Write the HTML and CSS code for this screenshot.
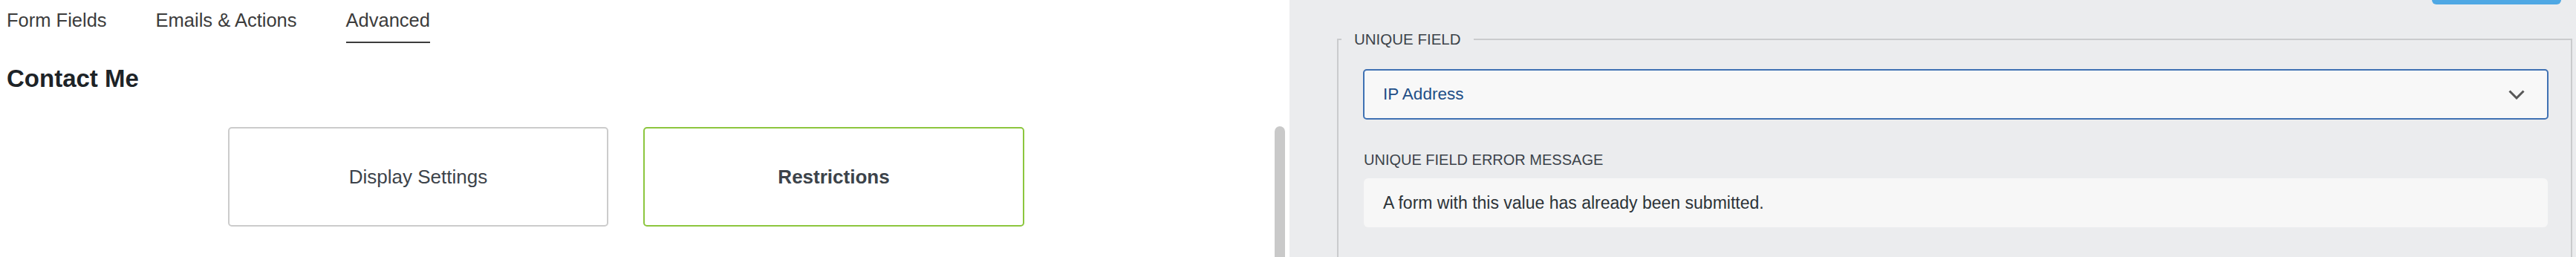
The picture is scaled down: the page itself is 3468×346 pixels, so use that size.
FILE: index.html
```html
<!DOCTYPE html>
<html lang="en">
<head>
<meta charset="utf-8">
<title>Contact Me – Advanced</title>
<link rel="stylesheet" href="styles.css">
</head>
<body>
<div class="app">
  <div class="left">
    <div class="left-content">
      <nav class="tabs">
        <span class="tab">Form Fields</span>
        <span class="tab">Emails &amp; Actions</span>
        <span class="tab active">Advanced</span>
      </nav>
      <h2 class="form-title">Contact Me</h2>
      <div class="cards">
        <div class="card">Display Settings</div>
        <div class="card card-active">Restrictions</div>
      </div>
    </div>
    <div class="scroll"><div class="thumb"></div></div>
  </div>
  <div class="right">
    <div class="topbar"><div class="save-btn"></div></div>
    <fieldset class="group">
      <legend class="group-legend">UNIQUE FIELD</legend>
      <div class="group-body">
        <div class="select">
          <span class="select-value">IP Address</span>
          <svg class="chevron" width="22" height="13" viewBox="0 0 22 13"><polyline points="1.5,1.5 11,11 20.5,1.5" fill="none" stroke="#575757" stroke-width="3"/></svg>
        </div>
        <div class="field-label">UNIQUE FIELD ERROR MESSAGE</div>
        <div class="text-input">A form with this value has already been submitted.</div>
      </div>
    </fieldset>
  </div>
</div>
</body>
</html>
```

FILE: styles.css
```css
html, body {
  margin: 0;
  padding: 0;
  height: 346px;
  overflow: hidden;
  background: #fff;
  font-family: "Liberation Sans", Arial, sans-serif;
}

.app {
  display: flex;
  height: 346px;
}

.left {
  width: 1736px;
  flex: none;
  display: flex;
  background: #fff;
}

.left-content {
  flex: 1;
  padding-left: 9px;
}

.tabs {
  display: flex;
  gap: 66px;
  padding-top: 12px;
}

.tab {
  font-size: 25.5px;
  line-height: 30px;
  color: #3c3c3c;
  padding-bottom: 14px;
  border-bottom: 2px solid transparent;
}

.tab.active {
  border-bottom-color: #3c3c3c;
}

.form-title {
  margin: 30px 0 0;
  font-size: 33px;
  line-height: 36px;
  font-weight: 700;
  color: #1d2327;
}

.cards {
  display: flex;
  gap: 47px;
  margin: 47px 0 0 298px;
}

.card {
  box-sizing: border-box;
  width: 512px;
  height: 134px;
  border: 2px solid #cccccc;
  border-radius: 5px;
  display: flex;
  align-items: center;
  justify-content: center;
  font-size: 26px;
  color: #3c434a;
}

.card-active {
  width: 513px;
  border-color: #8cc63e;
  font-weight: 700;
}

.scroll {
  width: 14px;
  margin-right: 6px;
  padding-top: 170px;
  flex: none;
}

.thumb {
  height: 300px;
  background: #c9c9c9;
  border-radius: 7px 7px 0 0;
}

.right {
  flex: 1;
  background: #ebecee;
}

.topbar {
  display: flex;
  justify-content: flex-end;
  padding-right: 20px;
}

.save-btn {
  width: 174px;
  height: 6px;
  background: #4fa8e4;
  border-radius: 0 0 6px 6px;
}

.group {
  margin: 36px 5px 0 64px;
  border: 2px solid #cacbcd;
  padding: 0 0 200px 4px;
}

.group-legend {
  padding: 0 17px;
  font-size: 20.5px;
  line-height: 22px;
  color: #3c434a;
}

.group-body {
  padding: 29px 31px 0 30px;
}

.select {
  box-sizing: border-box;
  height: 68px;
  margin: 0 -1px;
  border: 2px solid #3f71b3;
  border-radius: 5px;
  background: #f8f8f8;
  display: flex;
  align-items: center;
  justify-content: space-between;
  padding: 0 30px 0 25px;
}

.select-value {
  font-size: 22.5px;
  color: #1f4e87;
}

.chevron {
  display: block;
}

.field-label {
  margin-top: 42px;
  font-size: 20px;
  line-height: 24px;
  color: #3c434a;
}

.text-input {
  margin-top: 13px;
  height: 66px;
  border-radius: 6px;
  background: #f7f7f7;
  display: flex;
  align-items: center;
  padding-left: 26px;
  font-size: 23px;
  color: #2c3338;
}
```
